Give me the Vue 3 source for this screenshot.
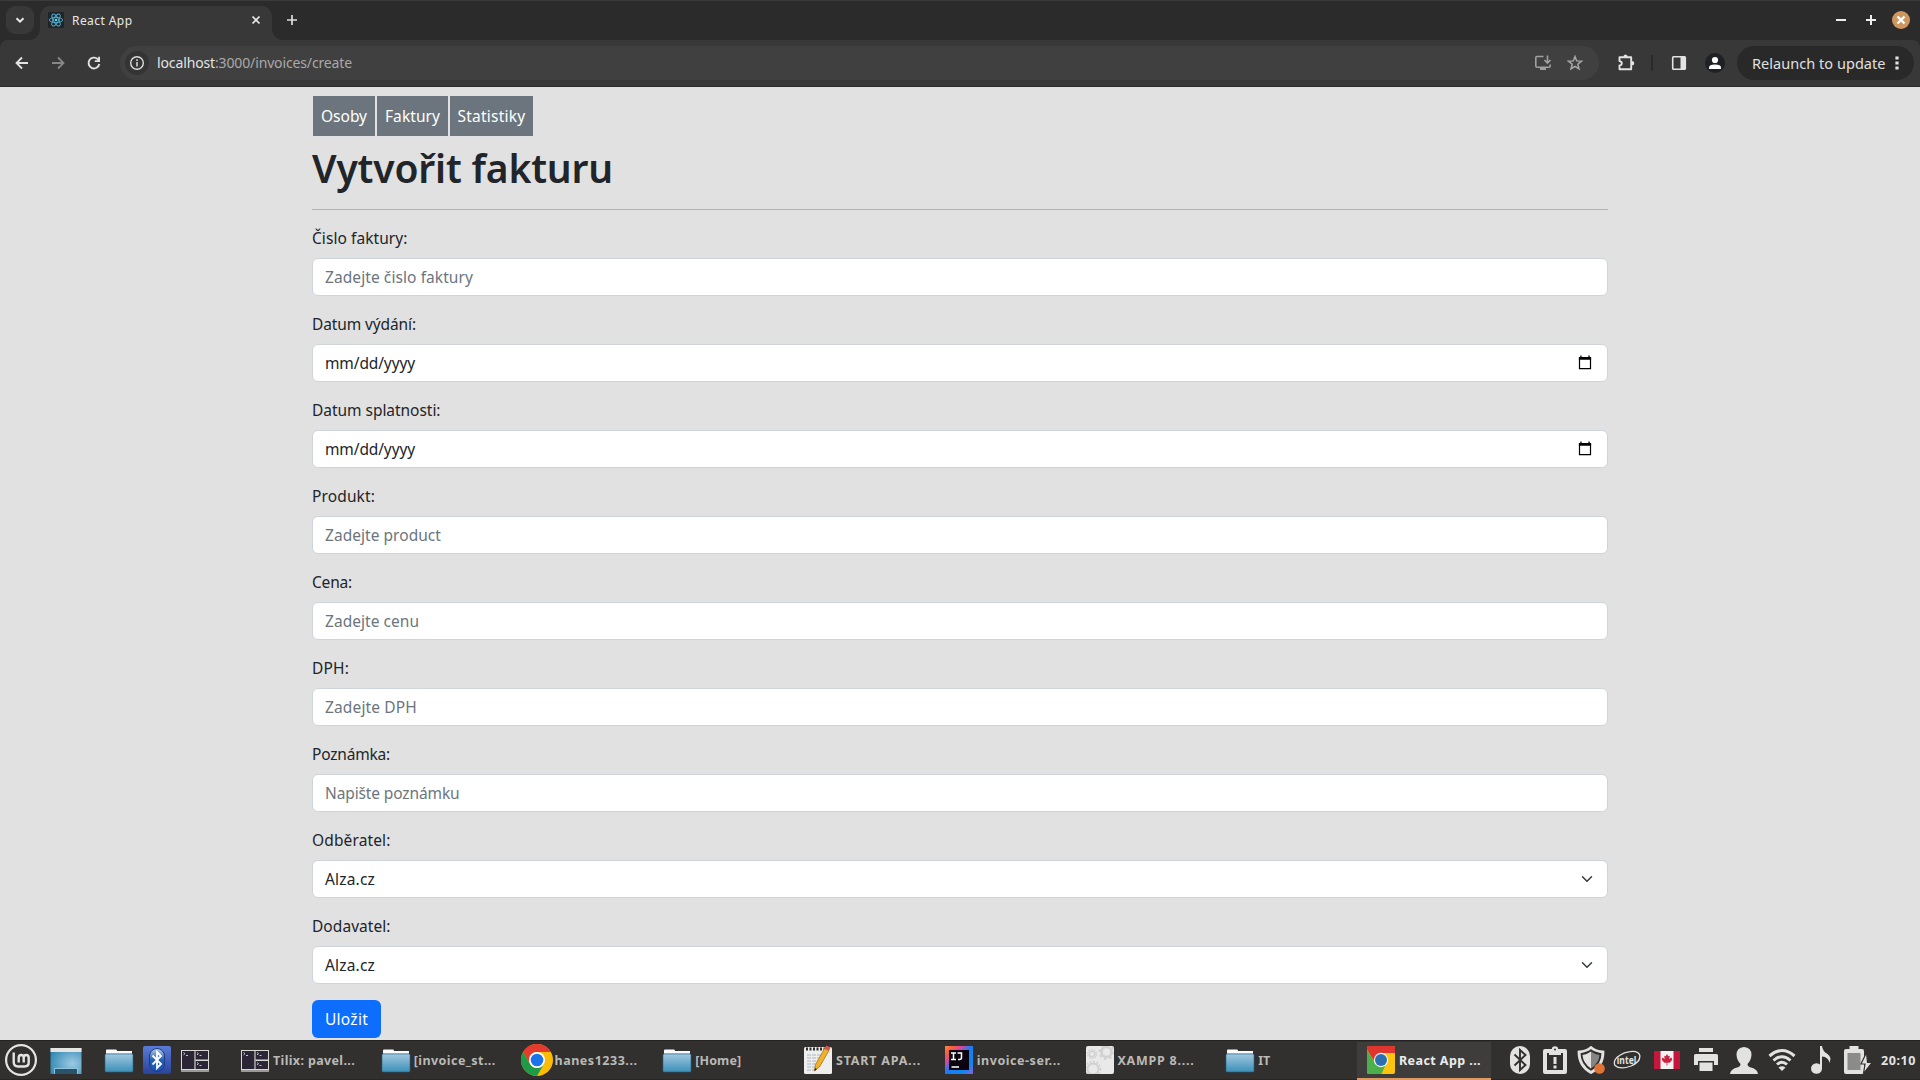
<script setup>
const fields = [
  { label: 'Čislo faktury:', lw: 95.5, text: 'Zadejte čislo faktury', w: 148, kind: 'input' },
  { label: 'Datum výdání:', lw: 104, text: 'mm/dd/yyyy', w: 90, kind: 'date' },
  { label: 'Datum splatnosti:', lw: 128.5, text: 'mm/dd/yyyy', w: 90, kind: 'date' },
  { label: 'Produkt:', lw: 63, text: 'Zadejte product', w: 116, kind: 'input' },
  { label: 'Cena:', lw: 40, text: 'Zadejte cenu', w: 94, kind: 'input' },
  { label: 'DPH:', lw: 37, text: 'Zadejte DPH', w: 92, kind: 'input' },
  { label: 'Poznámka:', lw: 78, text: 'Napište poznámku', w: 134.5, kind: 'input' },
  { label: 'Odběratel:', lw: 78.5, text: 'Alza.cz', w: 50, kind: 'select' },
  { label: 'Dodavatel:', lw: 78.5, text: 'Alza.cz', w: 50, kind: 'select' },
]

const nav = [
  { text: 'Osoby', w: 46, box: 62 },
  { text: 'Faktury', w: 55, box: 71 },
  { text: 'Statistiky', w: 68, box: 83 },
]

const windows = [
  { icon: 'tilix', text: 'Tilix: pavel...', w: 82 },
  { icon: 'folder', text: '[invoice_st...', w: 82 },
  { icon: 'chrome', text: 'hanes1233...', w: 83 },
  { icon: 'folder', text: '[Home]', w: 46 },
  { icon: 'notes', text: 'START APA...', w: 85 },
  { icon: 'idea', text: 'invoice-ser...', w: 84 },
  { icon: 'gears', text: 'XAMPP 8....', w: 77 },
  { icon: 'folder', text: 'IT', w: 12 },
  { icon: 'chromeapp', text: 'React App ...', w: 82, active: true },
]

// Tracks the text so that it fills the given width
const vFit = {
  mounted(el, { value }) {
    const natural = el.getBoundingClientRect().width
    el.style.letterSpacing = (value - natural) / el.textContent.length + 'px'
  },
}
</script>

<template>
  <div class="screen">
    <svg class="defs" width="0" height="0">
      <defs>
        <linearGradient id="gFolder" x1="0" y1="0" x2="0" y2="1">
          <stop offset="0" stop-color="#a3c8df" /><stop offset="1" stop-color="#3a8fb8" />
        </linearGradient>
        <linearGradient id="gBlue" x1="0" y1="0" x2="0" y2="1">
          <stop offset="0" stop-color="#5a7bd8" /><stop offset="1" stop-color="#2a4399" />
        </linearGradient>
        <linearGradient id="gOval" x1="0" y1="0" x2="0" y2="1">
          <stop offset="0" stop-color="#b5cbe6" /><stop offset=".5" stop-color="#255fb0" /><stop offset="1" stop-color="#1b55b8" />
        </linearGradient>
        <radialGradient id="gDesk" cx=".7" cy=".6" r=".8">
          <stop offset="0" stop-color="#9cc9e4" /><stop offset="1" stop-color="#2d86b0" />
        </radialGradient>
        <linearGradient id="gIdea" x1="0" y1="0" x2="1" y2="1">
          <stop offset="0" stop-color="#ff8a3c" /><stop offset=".15" stop-color="#f9603c" /><stop offset=".3" stop-color="#e0449c" />
          <stop offset=".48" stop-color="#1a7cf5" /><stop offset=".8" stop-color="#1286ee" /><stop offset="1" stop-color="#9a5bd8" />
        </linearGradient>
        <clipPath id="cGears"><rect x="2" y="2" width="28" height="28" rx="2" /></clipPath>
      </defs>
      <symbol id="folder" viewBox="0 0 32 32">
        <path d="M3 8V6.500Q3 5.500 4 5.500H13Q14 5.500 14 7H29V12H3z" fill="#fafafa" />
        <path d="M3 9.500H29" stroke="#c9c9c9" />
        <path d="M2 11Q2 10 3 10H29Q30 10 30 11V26.500Q30 28 29 28H3Q2 28 2 26.500z" fill="url(#gFolder)" stroke="#236487" stroke-width=".6" />
      </symbol>
      <symbol id="tilix" viewBox="0 0 32 32">
        <path d="M2 6H30V27H2z" fill="#d9d9d6" /><path d="M2 26H30V28H2z" fill="#9b9b96" />
        <path d="M3 7H15V25H3zM16.500 7H29V15.500H16.500zM16.500 17H29V25H16.500z" fill="#2b2535" />
        <path d="M15 7h1.500v18H15z" fill="#8d8d90" />
        <path d="M4.500 8.500l1.500 1.200-1.500 1.200M7 11.500h2M18 8.500l1.500 1.200-1.500 1.200M20.500 11.500h2M18 18.500l1.500 1.200-1.500 1.200M20.500 21.500h2" fill="none" stroke="#d5d5d5" stroke-width=".9" />
      </symbol>
      <symbol id="chrome" viewBox="0 0 32 32">
        <circle cx="16" cy="16" r="16" fill="#fbbc05" />
        <path d="M2.100 8A16 16 0 0 1 29.900 8H16A8 8 0 0 0 9.100 20z" fill="#e33b2e" />
        <path d="M2.100 8A16 16 0 0 0 16 32L22.900 20A8 8 0 0 1 9.100 20z" fill="#1f9a46" />
        <circle cx="16" cy="16" r="8" fill="#fff" /><circle cx="16" cy="16" r="6.300" fill="#1a73e8" />
      </symbol>
      <symbol id="notes" viewBox="0 0 32 32">
        <rect x="2" y="3" width="28" height="27" rx="1.500" fill="#eeeeec" />
        <path d="M4 5H28" stroke="#2d2d2d" stroke-width="3" stroke-dasharray="2 1.500" />
        <path d="M5 11h17M5 14h14M5 17h16M5 20h12M5 23h10M5 26h10" stroke="#a9b3c7" stroke-width="1" stroke-dasharray="4 1" />
        <path d="M22.500 4.500L27 6.500L17.500 23L12.500 27L13.500 20.500z" fill="#f0b12c" stroke="#9b6a12" stroke-width=".7" />
        <path d="M12.500 27l.4-3 2 1z" fill="#222" />
        <path d="M22.500 4.500l2-3 4.200 2L27 6.500z" fill="#d9534f" />
      </symbol>
      <symbol id="idea" viewBox="0 0 32 32">
        <rect x="2" y="2" width="28" height="28" fill="url(#gIdea)" /><rect x="6" y="6" width="20" height="20" fill="#0b0410" />
        <path d="M8 9h5M10.500 9v6.500M8 15.500h5M14.500 9h4v4.500q0 2-2 2H15M8.500 23h7.500" fill="none" stroke="#fff" stroke-width="1.500" />
      </symbol>
      <symbol id="gears" viewBox="0 0 32 32">
        <rect x="2" y="2" width="28" height="28" rx="2" fill="#e9e9e9" />
        <g fill="none" stroke="#d0d0d0" clip-path="url(#cGears)">
          <circle cx="8" cy="10" r="2.800" stroke-width="1.500" /><circle cx="8" cy="10" r="4.500" stroke-width="1.500" stroke-dasharray="1.500 1.300" />
          <circle cx="22.500" cy="8" r="5" stroke-width="2.500" /><circle cx="22.500" cy="8" r="7" stroke-width="2" stroke-dasharray="2.500 3" />
          <circle cx="9" cy="25" r="5.500" stroke-width="1.800" /><circle cx="9" cy="25" r="7.500" stroke-width="1.500" stroke-dasharray="2 1.500" />
        </g>
      </symbol>
      <symbol id="chromeapp" viewBox="0 0 32 32">
        <rect x="2" y="2" width="28" height="28" rx="2" fill="#fbc50f" />
        <path d="M4 2H28Q30 2 30 4V9H16L9.500 18L2 5.500V4Q2 2 4 2z" fill="#e0352d" />
        <path d="M2 5.500L10 19.500L20 22L16.500 30H4Q2 30 2 28z" fill="#4bb04a" />
        <circle cx="16" cy="16" r="7.200" fill="#eef3f6" /><circle cx="16" cy="16" r="6" fill="#2c6fb0" />
      </symbol>
    </svg>

    <header class="tabstrip">
      <div class="tabsearch"><svg width="12" height="12" viewBox="0 0 12 12"><path d="M2.500 4.200L6 7.600L9.500 4.200" fill="none" stroke="#e8e8e8" stroke-width="2" /></svg></div>
      <div class="tab">
        <svg class="favicon" width="16" height="16" viewBox="0 0 16 16">
          <rect width="16" height="16" rx="1" fill="#20232a" />
          <g fill="none" stroke="#4fb4cf" stroke-width=".9">
            <ellipse cx="8" cy="8" rx="6.700" ry="2.600" /><ellipse cx="8" cy="8" rx="6.700" ry="2.600" transform="rotate(60 8 8)" /><ellipse cx="8" cy="8" rx="6.700" ry="2.600" transform="rotate(120 8 8)" />
          </g><circle cx="8" cy="8" r="1.300" fill="#61dafb" />
        </svg>
        <span class="tabtitle"><span v-fit="60.5">React App</span></span>
        <svg class="tabclose" width="10" height="10" viewBox="0 0 10 10"><path d="M1.500 1.500L8.500 8.500M8.500 1.500L1.500 8.500" stroke="#e8e8e8" stroke-width="1.700" /></svg>
      </div>
      <svg class="newtab" width="12" height="12" viewBox="0 0 12 12"><path d="M6 1V11M1 6H11" stroke="#dedede" stroke-width="1.700" /></svg>
      <div class="winbtns">
        <svg width="10" height="10" viewBox="0 0 10 10"><path d="M0 5H10" stroke="#eee" stroke-width="2" /></svg>
        <svg width="10" height="10" viewBox="0 0 10 10"><path d="M0 5H10M5 0V10" stroke="#eee" stroke-width="2" /></svg>
        <svg width="18" height="18" viewBox="0 0 18 18"><circle cx="9" cy="9" r="9" fill="#d0965f" /><path d="M5.500 5.500L12.500 12.500M12.500 5.500L5.500 12.500" stroke="#fff" stroke-width="2.400" /></svg>
      </div>
    </header>

    <div class="toolbar">
      <div class="cell"><svg width="16" height="16" viewBox="0 0 16 16"><path d="M14 8H3M8 2.500L2.500 8L8 13.500" fill="none" stroke="#e3e3e3" stroke-width="1.800" /></svg></div>
      <div class="cell"><svg width="16" height="16" viewBox="0 0 16 16"><path d="M2 8H13M8 2.500L13.500 8L8 13.500" fill="none" stroke="#878787" stroke-width="1.800" /></svg></div>
      <div class="cell"><svg width="16" height="16" viewBox="0 0 16 16"><path d="M13.300 9A5.400 5.400 0 1 1 11.800 4.200L13 5.500" fill="none" stroke="#e3e3e3" stroke-width="1.900" /><path d="M14 1.800V7H8.800V5.300H12.200V1.800z" fill="#e3e3e3" /></svg></div>
      <div class="omnibox">
        <div class="info"><svg width="16" height="16" viewBox="0 0 16 16"><circle cx="8" cy="8" r="6.300" fill="none" stroke="#dcdcdc" stroke-width="1.400" /><path d="M8 7V11.500M8 4.300V6" stroke="#dcdcdc" stroke-width="1.500" /></svg></div>
        <span class="url"><span v-fit="58" class="host">localhost</span><span v-fit="137">:3000/invoices/create</span></span>
        <svg class="install" width="18" height="18" viewBox="0 0 18 18"><path d="M9.500 2.500H3Q1.800 2.500 1.800 3.700V12Q1.800 13.200 3 13.200H15Q16.200 13.200 16.200 12V10.500" fill="none" stroke="#a0a0a0" stroke-width="1.600" /><path d="M6 13.500h6v2.500H6z" fill="#a0a0a0" /><path d="M13.500 1.500V8.500M10.500 6L13.500 9L16.500 6" fill="none" stroke="#a0a0a0" stroke-width="1.600" /></svg>
        <svg width="16" height="16" viewBox="0 0 16 16"><path d="M8 1.500L9.700 5.900L14.500 6.200L10.800 9.200L12 13.900L8 11.300L4 13.900L5.200 9.200L1.500 6.200L6.300 5.900z" fill="none" stroke="#a8a8a8" stroke-width="1.500" /></svg>
      </div>
      <div class="cell ext"><svg width="18" height="18" viewBox="0 0 18 18"><path d="M2.500 3.200H14.200V15.300H2.500V11.500Q4.800 11.300 4.800 9.300Q4.800 7.300 2.500 7.100z" fill="none" stroke="#e3e3e3" stroke-width="1.900" stroke-linejoin="round" /><path d="M6.300 3Q6.300 .5 8.500 .5T10.700 3zM14.500 7Q17.200 7 17.200 9.200T14.500 11.400z" fill="#e3e3e3" /></svg></div>
      <div class="sep"></div>
      <div class="cell"><svg width="16" height="16" viewBox="0 0 16 16"><rect x="1.700" y="1.700" width="12.600" height="12.600" rx=".8" fill="none" stroke="#e3e3e3" stroke-width="1.600" /><path d="M9.500 1.500H14V14.500H9.500z" fill="#e3e3e3" /></svg></div>
      <div class="cell"><svg width="20" height="20" viewBox="0 0 20 20"><circle cx="10" cy="10" r="10" fill="#1f2124" /><circle cx="10" cy="7" r="3.100" fill="#fff" /><path d="M4 16V14.500Q4 11.500 10 11.500T16 14.500V16z" fill="#fff" /></svg></div>
      <div class="relaunch"><span v-fit="133.500">Relaunch to update</span><svg width="4" height="16" viewBox="0 0 4 16"><path d="M.4 1.400h3.200v3.200H.4zM.4 6.400h3.200v3.200H.4zM.4 11.400h3.200v3.200H.4z" fill="#e3e3e3" /></svg></div>
    </div>

    <main class="page">
      <nav class="nav">
        <a v-for="n in nav" :key="n.text" class="navlink" :style="{ width: n.box + 'px' }"><span v-fit="n.w">{{ n.text }}</span></a>
      </nav>
      <h1><span v-fit="301">Vytvořit fakturu</span></h1>
      <hr />
      <form>
        <div v-for="f in fields" :key="f.label" class="group">
          <label><span v-fit="f.lw">{{ f.label }}</span></label>
          <div class="control" :class="f.kind">
            <span v-fit="f.w">{{ f.text }}</span>
            <svg v-if="f.kind === 'date'" class="cal" width="14" height="15" viewBox="0 0 14 15"><path d="M1.500 3H12.500V13.700H1.500z" fill="none" stroke="#000" stroke-width="1.200" /><path d="M.9 2H13.100V4.800H.9zM2.300 .5h1.300V2H2.300zM10.400 .5h1.300V2H10.400z" fill="#000" /></svg>
            <svg v-if="f.kind === 'select'" width="16" height="12" viewBox="0 0 16 16"><path d="m2 5 6 6 6-6" fill="none" stroke="#343a40" stroke-width="2" stroke-linecap="round" stroke-linejoin="round" /></svg>
          </div>
        </div>
        <button type="button" class="save"><span v-fit="43">Uložit</span></button>
      </form>
    </main>

    <footer class="taskbar">
      <div class="launchers">
        <svg width="32" height="32" viewBox="0 0 32 32"><circle cx="16" cy="16" r="14.900" fill="none" stroke="#e4e4e4" stroke-width="2.200" /><path d="M8.700 8.500V18Q8.700 22.500 13 22.500H19.500Q23.700 22.500 23.700 18.500V13.700Q23.700 11 21.200 11T18.700 13.700V18.500M18.700 13.700Q18.700 11 16.200 11T13.700 13.700V18.500" fill="none" stroke="#e4e4e4" stroke-width="2.400" /></svg>
        <svg class="desk" width="32" height="28" viewBox="0 0 32 28"><rect x=".5" y="1" width="31" height="26" fill="url(#gDesk)" /><path d="M.5 1h31v4H.5z" fill="#e5e5e2" /><path d="M4.500 27V21.500H27.500V27" fill="none" stroke="#8cc3e0" /><path d="M5 22h22v5H5z" fill="#28536a" /></svg>
        <svg class="fold" width="32" height="32"><use href="#folder" /></svg>
        <svg class="bt" width="28" height="28" viewBox="0 0 28 28"><rect width="28" height="28" rx="2" fill="url(#gBlue)" /><rect x="6.500" y="2.500" width="15" height="23" rx="7.500" fill="url(#gOval)" stroke="#1c3a86" /><path d="M9.500 9.500L18 18L14 22V6L18 10L9.500 18.500" fill="none" stroke="#fff" stroke-width="1.800" /></svg>
        <svg class="tx" width="32" height="32"><use href="#tilix" /></svg>
      </div>
      <div class="winlist">
        <div v-for="(w, i) in windows" :key="i" class="win" :class="{ active: w.active }">
          <svg width="32" height="32"><use :href="'#' + w.icon" /></svg>
          <span v-fit="w.w">{{ w.text }}</span>
        </div>
      </div>
      <div class="tray">
        <svg width="28" height="28" viewBox="0 0 28 28"><rect x="4" width="20" height="28" rx="10" fill="#e2e2e0" /><path d="M8.500 8.500L19.500 19L14 24V4L19.500 9L8.500 19.500" fill="none" stroke="#31302e" stroke-width="1.900" /></svg>
        <svg class="clip" width="28" height="28" viewBox="0 0 28 28"><path d="M4 5H24V26H4z" fill="none" stroke="#e2e2e0" stroke-width="4" stroke-linejoin="round" /><path d="M8 3.500H20V9H8z" fill="#e2e2e0" /><circle cx="14" cy="3.500" r="3.200" fill="#e2e2e0" /><circle cx="14" cy="3.500" r="1" fill="#31302e" /><path d="M12.500 11h3v7h-3zM12.500 19.500h3v3h-3z" fill="#e2e2e0" /></svg>
        <svg width="28" height="28" viewBox="0 0 28 28"><path d="M14 1.500Q19 5.500 26 6Q26 20 14 26.500Q2 20 2 6Q9 5.500 14 1.500z" fill="#31302e" stroke="#e2e2e0" stroke-width="2.800" /><path d="M14 5.500V22.500Q6 17 5.500 9Q10 8.500 14 5.500z" fill="#e2e2e0" /><path d="M14 5.500V22.500Q22 17 22.500 9Q18 8.500 14 5.500z" fill="#858583" /><circle cx="22.500" cy="22.500" r="5.300" fill="#df7439" /></svg>
        <svg width="28" height="28" viewBox="0 0 28 28"><path d="M17 5.700Q25.500 4.500 26.800 9.500Q27.500 16 18 20Q7 24 2 19.500Q-.5 14 6.500 9.500M17 5.700Q11 6.200 6.500 9.500" fill="none" stroke="#e2e2e0" stroke-width="1.300" /><text x="3.800" y="17.500" textLength="19.500" lengthAdjust="spacingAndGlyphs" font-size="10.500" font-weight="bold" fill="#e2e2e0">intel</text></svg>
        <svg class="flag" width="26" height="18" viewBox="0 0 26 18"><rect width="26" height="18" fill="#f3f3f3" /><path d="M0 0h6.500v18H0zM19.500 0H26v18h-6.500z" fill="#c4173b" /><path d="M13 3L14.300 5.300L15.800 4.700L15.300 8L17.500 6.500L18.300 8.800L15.700 11.800H13.400V14.500H12.600V11.800H10.300L7.700 8.800L8.500 6.500L10.700 8L10.200 4.700L11.700 5.300z" fill="#cb2240" /></svg>
        <svg width="28" height="28" viewBox="0 0 28 28"><path d="M7 2h14v4H7zM3.500 8h21q1.500 0 1.500 1.500V19h-4v-4H6v4H2V9.500Q2 8 3.500 8zM7.500 16.500h13V25h-13z" fill="#e2e2e0" /></svg>
        <svg class="user" width="28" height="28" viewBox="0 0 28 28"><path d="M14 1Q21.500 1.500 21.500 9Q21 14.500 17.500 18Q17.500 20.500 21 21.500Q27.500 23 28 28H0Q.5 23 7 21.500Q10.500 20.500 10.500 18Q7 14.500 6.500 9Q6.500 1.500 14 1z" fill="#e2e2e0" /></svg>
        <svg class="wifi" width="28" height="28" viewBox="0 0 28 28"><path d="M1.500 10Q14 -1 26.500 10M5.500 14.500Q14 7 22.500 14.500M9 18.500Q14 14 19 18.500" fill="none" stroke="#e2e2e0" stroke-width="3" /><path d="M10.500 21.500Q14 19 17.500 21.500L14 25z" fill="#e2e2e0" /></svg>
        <svg class="music" width="28" height="28" viewBox="0 0 28 28"><ellipse cx="9.500" cy="22.500" rx="5.500" ry="5.300" fill="#e2e2e0" /><path d="M13 0H15Q15.500 5 20.500 8Q25 11 22.500 17Q21.500 11 15 10.500V23H13z" fill="#e2e2e0" /></svg>
        <svg class="power" width="28" height="28" viewBox="0 0 28 28"><path d="M5.500 3V0H14.500V3H18Q20 3 20 5V26Q20 28 18 28H2Q0 28 0 26V5Q0 3 2 3z" fill="#e2e2e0" /><path d="M3.500 7h13v17h-13z" fill="#8b8b89" /><path d="M22.500 6.500L17 18H21L19.500 27.500L28 16.500H23.500z" fill="#e2e2e0" stroke="#31302e" stroke-width="1.200" /></svg>
      </div>
      <div class="clock"><span v-fit="35">20:10</span></div>
    </footer>
  </div>
</template>

<style>
html, body { background: #e1e1e1; overflow: hidden; }
</style>

<style scoped>
.screen { width: 1920px; height: 1080px; display: flex; flex-direction: column; overflow: hidden; background: #e1e1e1; color: #212529; font-family: "Noto Sans", "Open Sans", sans-serif; font-size: 15.5px; line-height: 24px; }
.screen * { box-sizing: border-box; }
.screen span { white-space: nowrap; }
svg { display: block; flex: none; }
.defs { position: absolute; }

.tabstrip { position: relative; z-index: 1; flex: none; display: flex; height: 40px; padding: 5px 10px 0 6px; background: #2b2b2b; border-top: 1px solid #3b3b3b; }
.tabsearch { width: 28px; height: 28px; border-radius: 9px; background: #383838; display: flex; align-items: center; justify-content: center; }
.tab { position: relative; display: flex; align-items: flex-start; width: 232px; height: 34px; margin-left: 6px; padding: 6px 11px 0 8px; border-radius: 10px 10px 0 0; background: #383838; }
.tab::before, .tab::after { content: ""; position: absolute; bottom: 0; width: 10px; height: 10px; }
.tab::before { left: -10px; background: radial-gradient(circle at 0 0, transparent 9.500px, #383838 10px); }
.tab::after { right: -10px; background: radial-gradient(circle at 100% 0, transparent 9.500px, #383838 10px); }
.tabtitle { margin-left: 8px; height: 16px; line-height: 17px; font-size: 12px; color: #e8e8e8; }
.tabclose { margin: 3px 0 0 auto; }
.newtab { margin: 8px 0 0 14px; }
.winbtns { display: flex; align-items: center; height: 28px; margin-left: auto; gap: 20px; }
.winbtns svg:last-child { margin-left: -4px; }

.toolbar { flex: none; display: flex; align-items: center; height: 47px; padding: 0 6px 0 4px; background: #383838; border-bottom: 1px solid #292929; border-radius: 8px 8px 0 0; box-shadow: 0 -8px 0 #2b2b2b; }
.cell { width: 36px; display: flex; justify-content: center; }
.omnibox { display: flex; align-items: center; width: 1479px; height: 34px; margin-left: 8px; padding: 0 16px 0 5px; border-radius: 17px; background: #404040; }
.info { width: 24px; height: 24px; border-radius: 50%; background: #343434; display: flex; align-items: center; justify-content: center; }
.url { margin-left: 8px; font-size: 14px; color: #a9a9a9; }
.host { color: #e3e3e3; }
.install { margin: 0 15px 0 auto; }
.ext { margin-left: 8px; padding-left: 2px; }
.sep { width: 2px; height: 16px; margin: 0 8px; background: #2a2a2a; }
.relaunch { display: flex; align-items: center; justify-content: space-between; width: 177px; height: 34px; margin-left: 4px; padding: 0 15px; border-radius: 17px; background: #292929; color: #e0e0e0; font-size: 14.500px; }

.page { flex: 1; min-height: 0; width: 1296px; margin: 0 auto; padding-top: 9px; }
.nav { display: flex; gap: 2px; margin-left: 1px; height: 40px; }
.navlink { display: flex; align-items: center; justify-content: center; height: 40px; background: #6c757d; color: #fff; }
h1 { margin: 8px 0 16px; font-size: 39px; line-height: 48px; font-weight: 600; height: 49px; }
hr { margin: 0 0 16px; height: 1px; border: 0; background: #b0b1b1; }
.group { margin-bottom: 16px; }
label { display: block; height: 24px; margin-bottom: 8px; }
.control { display: flex; align-items: center; justify-content: space-between; height: 38px; padding: 0 12px; border: 1px solid #ced4da; border-radius: 6px; background: #fff; }
.input { color: #6c757d; }
.cal { margin: 0 3px 2px 0; }
.save { display: flex; align-items: center; justify-content: center; width: 69px; height: 38px; padding: 0; border: 0; border-radius: 6px; background: #0d6efd; color: #fff; font: inherit; }

.taskbar { flex: none; display: flex; align-items: center; height: 40px; background: #31302e; box-shadow: inset 0 1px #242322, inset 0 -1px #272625; }
.launchers { flex: none; display: flex; align-items: center; width: 231px; padding-left: 5px; }
.desk { margin: 2px 0 0 13px; }
.fold { margin-left: 21px; }
.bt { margin-left: 8px; }
.tx { margin-left: 8px; }
.winlist { flex: none; display: flex; gap: 6.750px; }
.win { display: flex; align-items: center; gap: 2px; width: 134px; height: 40px; padding-left: 8px; font-size: 12.500px; font-weight: 700; color: #bab9b7; }
.win span { padding-top: 1px; }
.active { height: 38px; margin-top: 2px; border-bottom: 2px solid #df9a60; background: #3e3d3b; color: #ececea; }
.tray { flex: none; display: flex; align-items: center; gap: 8px; margin-left: 15px; }
.clip { margin-left: -1px; }
.flag { margin: 0 4px 0 5px; }
.user, .wifi { margin-left: 2px; }
.music { margin-left: 3px; }
.power { margin-left: 1px; }
.clock { flex: none; margin-left: 9px; padding-top: 1px; font-size: 12.500px; font-weight: 700; color: #e4e4e2; }
</style>
